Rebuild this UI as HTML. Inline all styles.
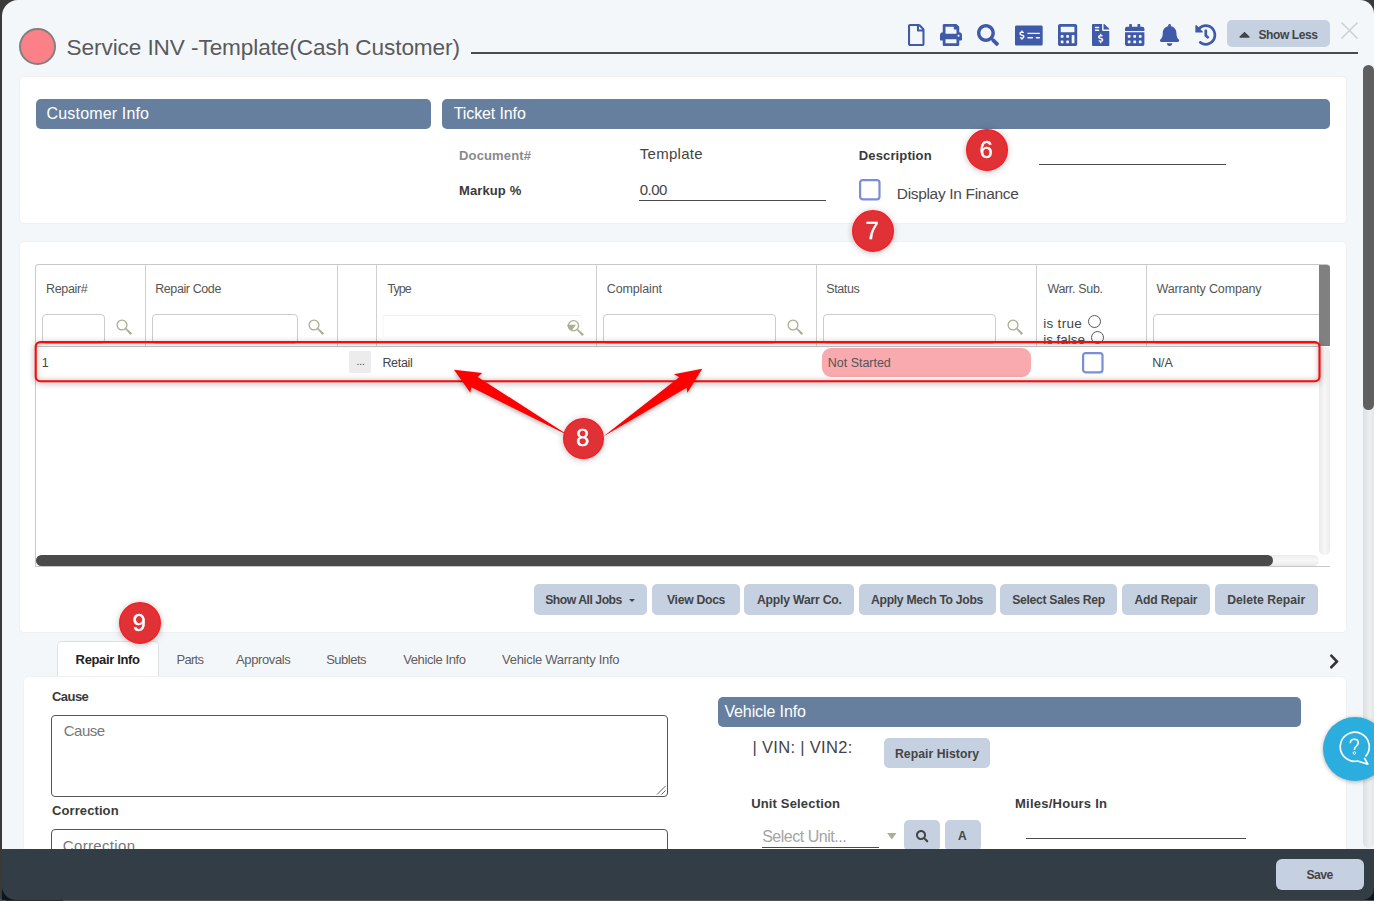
<!DOCTYPE html>
<html><head><meta charset="utf-8"><title>Service INV</title>
<style>
html,body{margin:0;padding:0;}
body{width:1374px;height:901px;overflow:hidden;position:relative;background:#3a3a3a;font-family:"Liberation Sans",sans-serif;}
div,span,svg{position:absolute;box-sizing:border-box;}
.t{white-space:nowrap;line-height:1;}
.ic{overflow:visible;}
#modal{left:2px;top:0;width:1372px;height:900px;background:#f4f7fa;border-radius:16px 14px 12px 14px;overflow:hidden;}
.panel{background:#fff;border:1px solid #eef0f2;border-radius:5px;}
.bar{background:#677f9f;border-radius:5px;height:30px;}
.btn{background:#c5d0e1;border-radius:5px;}
.ul{height:1px;background:#4a4a4a;}
.col{width:1px;background:#d0d0d0;top:265px;height:81px;}
.fin{border:1px solid #ccc;border-radius:4px;background:#fff;top:314px;height:30px;}
.radio{width:13px;height:13px;border:1px solid #555;border-radius:50%;background:#fff;}
</style></head><body>
<div id="modal"></div>

<!-- header -->
<div style="left:19px;top:28px;width:37px;height:37px;border-radius:50%;background:#fb8087;border:2px solid #808080"></div>
<div style="left:471px;top:52px;width:887px;height:2px;background:#4a4a4a"></div>
<div class="btn" style="left:1227px;top:20px;width:103px;height:27px"></div>
<svg class="ic" style="left:1341px;top:22px;width:17px;height:17px" viewBox="0 0 17 17"><path d="M0.500 0.500L16.500 16.500M16.500 0.500L0.500 16.500" stroke="#cfcfcf" stroke-width="1.600" fill="none"/></svg>

<!-- panel 1 -->
<div class="panel" style="left:19px;top:76px;width:1328px;height:148px"></div>
<div class="bar" style="left:36px;top:99px;width:395px"></div>
<div class="bar" style="left:442px;top:99px;width:888px"></div>
<div class="ul" style="left:639px;top:200px;width:187px"></div>
<div class="ul" style="left:1039px;top:164px;width:187px"></div>
<svg class="ic" style="left:859.1px;top:179.4px;width:21.6px;height:21.4px" viewBox="0 0 21.6 21.4"><rect x="1.1" y="1.1" width="19.4" height="19.2" rx="2.5" fill="#fff" stroke="#7b8dd6" stroke-width="2.2"/></svg>

<!-- panel 2 : grid -->
<div class="panel" style="left:19px;top:241px;width:1328px;height:392px"></div>
<div style="left:35px;top:264px;width:1295px;height:303px;border:1px solid #c8c8c8;border-right:none;border-radius:4px 4px 0 0;background:#fff"></div>
<div style="left:36px;top:346px;width:1283px;height:1px;background:#c4c4c4"></div>
<div class="col" style="left:145px"></div><div class="col" style="left:337px"></div><div class="col" style="left:376px"></div>
<div class="col" style="left:596px"></div><div class="col" style="left:816px"></div><div class="col" style="left:1036px"></div><div class="col" style="left:1146px"></div>
<div class="fin" style="left:42px;width:63px"></div>
<div class="fin" style="left:152px;width:146px"></div>
<div class="fin" style="left:383px;width:199px;border-color:#efefef;border-radius:0;border-left-color:#f8f8f8;border-right-color:#f8f8f8;border-bottom-color:#fdfdfd;top:315px;height:22px"></div>
<div class="fin" style="left:603px;width:173px"></div>
<div class="fin" style="left:823px;width:173px"></div>
<div class="fin" style="left:1153px;width:173px"></div>
<svg class="ic" style="left:116.1px;top:319.3px;width:17px;height:17px" viewBox="0 0 17 17"><circle cx="6" cy="6" r="4.9" fill="none" stroke="#a9af90" stroke-width="1.3"/><path d="M9.2 10 L10.3 8.900 L16.1 14.200 L14.400 16.100 Z" fill="#a9af90"/></svg><svg class="ic" style="left:308.3px;top:319.3px;width:17px;height:17px" viewBox="0 0 17 17"><circle cx="6" cy="6" r="4.9" fill="none" stroke="#a9af90" stroke-width="1.3"/><path d="M9.2 10 L10.3 8.900 L16.1 14.200 L14.400 16.100 Z" fill="#a9af90"/></svg><svg class="ic" style="left:786.8px;top:319.3px;width:17px;height:17px" viewBox="0 0 17 17"><circle cx="6" cy="6" r="4.9" fill="none" stroke="#a9af90" stroke-width="1.3"/><path d="M9.2 10 L10.3 8.900 L16.1 14.200 L14.400 16.100 Z" fill="#a9af90"/></svg><svg class="ic" style="left:1006.8px;top:319.3px;width:17px;height:17px" viewBox="0 0 17 17"><circle cx="6" cy="6" r="4.9" fill="none" stroke="#a9af90" stroke-width="1.3"/><path d="M9.2 10 L10.3 8.900 L16.1 14.200 L14.400 16.100 Z" fill="#a9af90"/></svg>
<svg class="ic" style="left:560px;top:315px;width:30px;height:25px" viewBox="560 315 30 25"><circle cx="573.500" cy="325.700" r="5.100" fill="none" stroke="#a9af90" stroke-width="1.300"/><path d="M566.900 324.700 L575.900 324.700 L572.400 329.700 L570.300 330 Q567.700 328.300 567.400 325.700 Z" fill="#a9af90"/><path d="M576.700 329.900 L577.800 328.900 L583.900 334.300 L582.200 336.100 Z" fill="#a9af90"/></svg>
<div class="radio" style="left:1088px;top:315px"></div>
<div class="radio" style="left:1091px;top:331px"></div>
<!-- grid scrollbars -->
<div style="left:1319px;top:265px;width:11px;height:81px;background:#808080;border-radius:0 3px 0 0"></div>
<div style="left:1319px;top:346px;width:11px;height:209px;background:linear-gradient(90deg,#e9e9e9,#f7f7f7 50%,#ececec);border-radius:6px"></div>
<div style="left:36px;top:555px;width:1283px;height:11px;background:linear-gradient(#ececec,#f7f7f7 50%,#e9e9e9);border-radius:6px"></div>
<div style="left:36px;top:555px;width:1237px;height:11px;background:#4a4a4a;border-radius:6px"></div>
<!-- row -->
<div style="left:349px;top:351px;width:22px;height:22px;background:#ececec"></div>
<span class="t" style="left:356.5px;top:357px;font-size:10px;color:#444;letter-spacing:0">...</span>
<div style="left:822px;top:348px;width:209px;height:29px;background:#f8aaae;border-radius:9px"></div>
<svg class="ic" style="left:1081.5px;top:351.7px;width:21.6px;height:21.4px" viewBox="0 0 21.6 21.4"><rect x="1.1" y="1.1" width="19.4" height="19.2" rx="2.5" fill="#fff" stroke="#7b8dd6" stroke-width="2.2"/></svg>
<!-- red annotation -->
<div style="left:35px;top:342px;width:1285px;height:40px;border-radius:5px;box-shadow:0 1px 6px 1px rgba(0,0,0,.24), inset 0 0 6px 1px rgba(0,0,0,.32)"></div>
<svg class="ic" style="z-index:3;left:30px;top:336px;width:1296px;height:52px" viewBox="30 336 1296 52"><rect x="35.700" y="342.100" width="1283.800" height="39.100" rx="4.500" fill="none" stroke="#fd0909" stroke-width="2.100"/></svg>
<svg class="ic" style="z-index:3;left:430px;top:340px;width:300px;height:140px;filter:drop-shadow(0 2px 2px rgba(0,0,0,.3))" viewBox="430 340 300 140">
<path fill="#fe0000" d="M453.950 369.800 L482.300 372.900 L477.750 376.900 L569.450 435.900 L471.400 387.300 L470.300 392.750 Z"/>
<path fill="#fe0000" d="M702.300 368.700 L673.900 374.200 L679.200 377.250 L603.300 436.400 L686.600 387.800 L687.400 392.750 Z"/>
</svg>

<!-- buttons row -->
<div class="btn" style="left:534px;top:584px;width:113px;height:31px"></div>
<div class="btn" style="left:652px;top:584px;width:88px;height:31px"></div>
<div class="btn" style="left:744px;top:584px;width:110px;height:31px"></div>
<div class="btn" style="left:859px;top:584px;width:137px;height:31px"></div>
<div class="btn" style="left:1000px;top:584px;width:117px;height:31px"></div>
<div class="btn" style="left:1122px;top:584px;width:88px;height:31px"></div>
<div class="btn" style="left:1215px;top:584px;width:103px;height:31px"></div>
<svg class="ic" style="left:629px;top:599px;width:6px;height:3px" viewBox="0 0 6 3"><path d="M0 0h6l-3 3z" fill="#444"/></svg>

<!-- tabs -->
<div style="left:57px;top:641px;width:102px;height:36px;background:#fff;border:1px solid #dee2e6;border-bottom:none;border-radius:5px 5px 0 0"></div>
<div class="panel" style="left:23px;top:676px;width:1324px;height:200px;border-radius:6px 6px 0 0"></div>
<div style="left:51px;top:715px;width:617px;height:82px;border:1px solid #555;border-radius:4px;background:#fff"></div>
<svg class="ic" style="left:656px;top:785px;width:10px;height:10px" viewBox="0 0 10 10"><path d="M9.500 1L1 9.500M9.500 5.500L5.500 9.500" stroke="#666" stroke-width="1" fill="none"/></svg>
<div style="left:51px;top:829px;width:617px;height:82px;border:1px solid #555;border-radius:4px;background:#fff"></div>
<div class="bar" style="left:718px;top:697px;width:583px"></div>
<div class="btn" style="left:884px;top:738px;width:106px;height:30px"></div>
<div class="ul" style="left:762px;top:847px;width:117px"></div>
<svg class="ic" style="left:886.600px;top:833px;width:9.600px;height:6.600px" viewBox="0 0 10 7"><path d="M0 0h10l-5 7z" fill="#a9af90"/></svg>
<div class="btn" style="left:904px;top:820px;width:36px;height:31px"></div>
<div class="btn" style="left:945px;top:820px;width:36px;height:31px"></div>
<div class="ul" style="left:1026px;top:838px;width:220px"></div>

<svg class="ic" style="z-index:4;left:557.10px;top:411.90px;width:53.0px;height:53.0px;filter:drop-shadow(0 1.5px 3px rgba(0,0,0,.25))" viewBox="0 0 53.0 53.0"><circle cx="26.5" cy="26.5" r="19.8" fill="#e03137" stroke="#fa1c22" stroke-width="1.4"/><text x="25.6" y="34.0" text-anchor="middle" font-family="Liberation Sans, sans-serif" font-size="24" font-weight="400" fill="#fff" stroke="#fff" stroke-width="0.4">8</text></svg>
<svg class="ic" style="z-index:4;left:959.55px;top:123.45px;width:54px;height:54px;filter:drop-shadow(0 1.5px 3px rgba(0,0,0,.25))" viewBox="0 0 54 54"><circle cx="27.0" cy="27.0" r="20.3" fill="#e03137" stroke="#fa1c22" stroke-width="1.4"/><text x="26.1" y="34.5" text-anchor="middle" font-family="Liberation Sans, sans-serif" font-size="24" font-weight="400" fill="#fff" stroke="#fff" stroke-width="0.4">6</text></svg>
<svg class="ic" style="z-index:4;left:845.60px;top:203.80px;width:54px;height:54px;filter:drop-shadow(0 1.5px 3px rgba(0,0,0,.25))" viewBox="0 0 54 54"><circle cx="27.0" cy="27.0" r="20.3" fill="#e03137" stroke="#fa1c22" stroke-width="1.4"/><text x="26.1" y="34.5" text-anchor="middle" font-family="Liberation Sans, sans-serif" font-size="24" font-weight="400" fill="#fff" stroke="#fff" stroke-width="0.4">7</text></svg>
<svg class="ic" style="z-index:4;left:112.65px;top:595.60px;width:54px;height:54px;filter:drop-shadow(0 1.5px 3px rgba(0,0,0,.25))" viewBox="0 0 54 54"><circle cx="27.0" cy="27.0" r="20.3" fill="#e03137" stroke="#fa1c22" stroke-width="1.4"/><text x="26.1" y="34.5" text-anchor="middle" font-family="Liberation Sans, sans-serif" font-size="24" font-weight="400" fill="#fff" stroke="#fff" stroke-width="0.4">9</text></svg>

<!-- main scrollbar -->
<div style="left:1363px;top:65px;width:11px;height:783px;background:linear-gradient(90deg,#dcdfe1,#eceeef 60%,#e4e6e8);border-radius:6px"></div>
<div style="left:1363px;top:65px;width:11px;height:345px;background:#5f5f5f;border-radius:6px"></div>

<!-- help bubble -->
<div style="left:1322.800px;top:717px;width:64px;height:64px;border-radius:50%;background:#2baedd;box-shadow:0 1px 4px rgba(0,0,0,.3)"></div>
<svg class="ic" style="left:1334.800px;top:729px;width:38px;height:38px" viewBox="1336 729 38 38"><path d="M1366.500 756.500 A14.500 14.500 0 1 0 1358.500 761 L1368.800 764.200 L1365.300 757.800" fill="none" stroke="#fff" stroke-width="1.700" stroke-linejoin="round"/><path d="M1351.300 743.200c0-2.400 1.700-3.900 4-3.900s4 1.400 4 3.500c0 2.500-2.300 3.300-3.300 4.800-.4.700-.5 1.300-.5 2.300" fill="none" stroke="#fff" stroke-width="1.600"/><circle cx="1355.400" cy="753" r="1.300" fill="none" stroke="#fff" stroke-width="1"/></svg>

<!-- footer -->
<div style="left:0;top:899px;width:1374px;height:2px;background:#505050;z-index:5"></div>
<div style="left:2px;top:880px;width:22px;height:20px;background:#0c1620;z-index:5"></div>
<div style="left:1350px;top:880px;width:24px;height:20px;background:#0c1620;z-index:5"></div>
<div style="left:6px;top:900px;width:57px;height:1px;background:#2c2c2c;z-index:5"></div>
<div style="left:2px;top:849px;width:1372px;height:51px;background:#333d45;border-radius:0 0 12px 14px;z-index:5"></div>
<div class="btn" style="left:1276px;top:859px;width:88px;height:31px;border-radius:6px;z-index:6"></div>

<svg class="ic" style="left:908px;top:24px;width:16.5px;height:22px" viewBox="0 0 384 512" preserveAspectRatio="none"><path fill="#3f5aa8" d="M369.9 97.9L286 14C277 5 264.8 0 252.1 0H48C21.500 0 0 21.500 0 48v416c0 26.500 21.500 48 48 48h288c26.500 0 48-21.500 48-48V131.900c0-12.700-5.100-25-14.100-34zM332.100 128H256V51.900l76.100 76.100zM48 464V48h160v104c0 13.300 10.700 24 24 24h104v288H48z"/></svg>
<svg class="ic" style="left:939.6px;top:24px;width:22px;height:22px" viewBox="0 0 512 512" preserveAspectRatio="none"><path fill="#3f5aa8" d="M448 192V77.250c0-8.490-3.370-16.620-9.370-22.630L393.370 9.370c-6-6-14.140-9.370-22.630-9.370H96C78.330 0 64 14.330 64 32v160c-35.350 0-64 28.650-64 64v112c0 8.840 7.160 16 16 16h48v96c0 17.670 14.330 32 32 32h320c17.670 0 32-14.330 32-32v-96h48c8.840 0 16-7.160 16-16V256c0-35.350-28.650-64-64-64zm-64 256H128v-96h256v96zm0-224H128V64h192v48c0 8.840 7.160 16 16 16h48v96zm48 72c-13.250 0-24-10.750-24-24 0-13.260 10.750-24 24-24s24 10.740 24 24c0 13.250-10.750 24-24 24z"/></svg>
<svg class="ic" style="left:977.3px;top:24px;width:22px;height:22px" viewBox="0 0 512 512" preserveAspectRatio="none"><path fill="#3f5aa8" d="M505 442.700L405.300 343c-4.500-4.500-10.600-7-17-7H372c27.600-35.300 44-79.700 44-128C416 93.100 322.900 0 208 0S0 93.100 0 208s93.100 208 208 208c48.300 0 92.700-16.400 128-44v16.300c0 6.400 2.500 12.500 7 17l99.700 99.700c9.400 9.400 24.600 9.400 33.900 0l28.300-28.300c9.400-9.400 9.400-24.600.1-34zM208 336c-70.700 0-128-57.200-128-128 0-70.700 57.200-128 128-128 70.700 0 128 57.200 128 128 0 70.700-57.200 128-128 128z"/></svg>
<svg class="ic" style="left:1014.6px;top:23.5px;width:27.7px;height:23px" viewBox="0 0 640 512" preserveAspectRatio="none"><path fill="#3f5aa8" d="M608 32H32C14.330 32 0 46.330 0 64v384c0 17.670 14.330 32 32 32h576c17.670 0 32-14.330 32-32V64c0-17.670-14.330-32-32-32zM176 327.880V344c0 4.420-3.580 8-8 8h-16c-4.420 0-8-3.580-8-8v-16.290c-11.290-.58-22.270-4.520-31.370-11.350-3.900-2.930-4.100-8.770-.57-12.140l11.750-11.210c2.770-2.640 6.890-2.760 10.130-.73 3.870 2.420 8.260 3.720 12.820 3.720h28.110c6.500 0 11.800-5.920 11.800-13.190 0-5.950-3.610-11.190-8.770-12.730l-45-13.500c-18.590-5.580-31.580-23.420-31.580-43.390 0-24.520 19.050-44.440 42.670-45.070V152c0-4.420 3.580-8 8-8h16c4.420 0 8 3.580 8 8v16.290c11.290.58 22.270 4.510 31.370 11.350 3.900 2.930 4.100 8.770.57 12.140l-11.750 11.210c-2.770 2.640-6.890 2.760-10.130.73-3.870-2.430-8.260-3.720-12.820-3.720h-28.110c-6.500 0-11.800 5.920-11.800 13.190 0 5.950 3.610 11.190 8.770 12.730l45 13.500c18.590 5.580 31.580 23.420 31.580 43.390 0 24.530-19.040 44.440-42.670 45.070zM416 312c0 4.420-3.580 8-8 8H296c-4.420 0-8-3.580-8-8v-16c0-4.420 3.580-8 8-8h112c4.420 0 8 3.580 8 8v16zm160 0c0 4.420-3.580 8-8 8h-80c-4.420 0-8-3.580-8-8v-16c0-4.420 3.580-8 8-8h80c4.420 0 8 3.580 8 8v16zm0-96c0 4.420-3.580 8-8 8H296c-4.420 0-8-3.580-8-8v-16c0-4.420 3.580-8 8-8h272c4.420 0 8 3.580 8 8v16z"/></svg>
<svg class="ic" style="left:1058.3px;top:24px;width:19.2px;height:22px" viewBox="0 0 448 512" preserveAspectRatio="none"><path fill="#3f5aa8" d="M400 0H48C22.400 0 0 22.400 0 48v416c0 25.600 22.400 48 48 48h352c25.600 0 48-22.400 48-48V48c0-25.600-22.400-48-48-48zM128 435.200c0 6.400-6.400 12.800-12.800 12.800H76.800c-6.400 0-12.800-6.400-12.800-12.800v-38.400c0-6.400 6.400-12.800 12.800-12.800h38.400c6.400 0 12.800 6.400 12.800 12.800v38.400zm0-128c0 6.400-6.400 12.800-12.800 12.800H76.800c-6.400 0-12.800-6.400-12.800-12.800v-38.400c0-6.400 6.400-12.800 12.800-12.800h38.400c6.400 0 12.800 6.400 12.800 12.800v38.400zm128 128c0 6.400-6.400 12.800-12.800 12.800h-38.400c-6.400 0-12.800-6.400-12.800-12.800v-38.400c0-6.400 6.400-12.800 12.800-12.800h38.400c6.400 0 12.800 6.400 12.800 12.800v38.400zm0-128c0 6.400-6.400 12.800-12.800 12.800h-38.400c-6.400 0-12.800-6.400-12.800-12.800v-38.400c0-6.400 6.400-12.800 12.800-12.800h38.400c6.400 0 12.800 6.400 12.800 12.800v38.400zm128 128c0 6.400-6.400 12.800-12.800 12.800h-38.400c-6.400 0-12.800-6.400-12.800-12.800V268.800c0-6.400 6.400-12.800 12.800-12.800h38.400c6.400 0 12.800 6.400 12.800 12.800v166.400zm0-256c0 6.400-6.400 12.800-12.800 12.800H76.800c-6.400 0-12.800-6.400-12.800-12.800V76.800C64 70.400 70.400 64 76.800 64h294.400c6.400 0 12.800 6.400 12.800 12.800v102.400z"/></svg>
<svg class="ic" style="left:1092.3px;top:24px;width:17.3px;height:22px" viewBox="0 0 384 512" preserveAspectRatio="none"><path fill="#3f5aa8" d="M377 105L279.100 7c-4.500-4.500-10.600-7-17-7H256v128h128v-6.100c0-6.300-2.500-12.400-7-16.900zm-153 31V0H24C10.700 0 0 10.700 0 24v464c0 13.300 10.700 24 24 24h336c13.300 0 24-10.700 24-24V160H248c-13.200 0-24-10.800-24-24zM64 72c0-4.420 3.580-8 8-8h80c4.420 0 8 3.580 8 8v16c0 4.420-3.580 8-8 8H72c-4.420 0-8-3.580-8-8V72zm0 80v-16c0-4.420 3.580-8 8-8h80c4.420 0 8 3.580 8 8v16c0 4.420-3.580 8-8 8H72c-4.420 0-8-3.580-8-8zm144 263.880V440c0 4.420-3.580 8-8 8h-16c-4.420 0-8-3.580-8-8v-24.290c-11.290-.58-22.270-4.520-31.370-11.350-3.900-2.930-4.100-8.770-.57-12.140l11.750-11.210c2.770-2.640 6.890-2.760 10.130-.73 3.870 2.420 8.260 3.720 12.820 3.720h28.110c6.500 0 11.800-5.920 11.800-13.190 0-5.950-3.610-11.190-8.770-12.730l-45-13.500c-18.590-5.580-31.580-23.420-31.580-43.390 0-24.520 19.050-44.440 42.670-45.070V232c0-4.420 3.580-8 8-8h16c4.420 0 8 3.580 8 8v24.290c11.290.58 22.270 4.510 31.370 11.350 3.900 2.930 4.100 8.770.57 12.140l-11.750 11.210c-2.770 2.640-6.890 2.760-10.130.73-3.870-2.430-8.260-3.720-12.820-3.720h-28.110c-6.500 0-11.800 5.920-11.800 13.190 0 5.950 3.610 11.190 8.770 12.730l45 13.500c18.590 5.580 31.580 23.420 31.580 43.390 0 24.530-19.050 44.440-42.670 45.070z"/></svg>
<svg class="ic" style="left:1124.7px;top:24px;width:19.4px;height:22px" viewBox="0 0 448 512" preserveAspectRatio="none"><path fill="#3f5aa8" d="M0 464c0 26.500 21.500 48 48 48h352c26.500 0 48-21.500 48-48V192H0v272zm320-196c0-6.600 5.400-12 12-12h40c6.600 0 12 5.400 12 12v40c0 6.600-5.400 12-12 12h-40c-6.600 0-12-5.400-12-12v-40zm0 128c0-6.600 5.400-12 12-12h40c6.600 0 12 5.400 12 12v40c0 6.600-5.400 12-12 12h-40c-6.600 0-12-5.400-12-12v-40zM192 268c0-6.600 5.400-12 12-12h40c6.600 0 12 5.400 12 12v40c0 6.600-5.400 12-12 12h-40c-6.600 0-12-5.400-12-12v-40zm0 128c0-6.600 5.400-12 12-12h40c6.600 0 12 5.400 12 12v40c0 6.600-5.400 12-12 12h-40c-6.600 0-12-5.400-12-12v-40zM64 268c0-6.600 5.400-12 12-12h40c6.600 0 12 5.400 12 12v40c0 6.600-5.400 12-12 12H76c-6.600 0-12-5.400-12-12v-40zm0 128c0-6.600 5.400-12 12-12h40c6.600 0 12 5.400 12 12v40c0 6.600-5.400 12-12 12H76c-6.600 0-12-5.400-12-12v-40zM400 64h-48V16c0-8.800-7.200-16-16-16h-32c-8.800 0-16 7.200-16 16v48H160V16c0-8.800-7.200-16-16-16h-32c-8.800 0-16 7.200-16 16v48H48C21.500 64 0 85.500 0 112v48h448v-48c0-26.500-21.500-48-48-48z"/></svg>
<svg class="ic" style="left:1159.8px;top:24px;width:19.2px;height:22px" viewBox="0 0 448 512" preserveAspectRatio="none"><path fill="#3f5aa8" d="M224 512c35.320 0 63.970-28.650 63.970-64H160.030c0 35.350 28.650 64 63.970 64zm215.390-149.710c-19.320-20.760-55.470-51.990-55.470-154.290 0-77.700-54.480-139.900-127.940-155.160V32c0-17.670-14.320-32-31.980-32s-31.980 14.330-31.980 32v20.840C118.560 68.100 64.080 130.300 64.080 208c0 102.300-36.150 133.530-55.470 154.290-6 6.450-8.660 14.160-8.610 21.710.11 16.400 12.980 32 32.100 32h383.800c19.120 0 32-15.600 32.100-32 .05-7.550-2.610-15.270-8.610-21.710z"/></svg>
<svg class="ic" style="left:1194.5px;top:24px;width:21.6px;height:22px" viewBox="0 0 512 512" preserveAspectRatio="none"><path fill="#3f5aa8" d="M504 255.531c.253 136.640-111.180 248.372-247.820 248.468-59.015.042-113.223-20.530-155.822-54.911-11.077-8.940-11.905-25.541-1.839-35.607l11.267-11.267c8.609-8.609 22.353-9.551 31.891-1.984C173.062 425.135 212.781 440 256 440c101.705 0 184-82.311 184-184 0-101.705-82.311-184-184-184-48.814 0-93.149 18.969-126.068 49.932l50.754 50.754c10.080 10.080 2.941 27.314-11.313 27.314H24c-8.837 0-16-7.163-16-16V38.627c0-14.254 17.234-21.393 27.314-11.314l49.372 49.372C129.209 34.136 189.552 8 256 8c136.810 0 247.747 110.780 248 247.531zm-180.912 78.784l9.823-12.630c8.138-10.463 6.253-25.542-4.210-33.679L288 256.349V152c0-13.255-10.745-24-24-24h-16c-13.255 0-24 10.745-24 24v135.651l65.409 50.874c10.463 8.137 25.541 6.253 33.679-4.210z"/></svg>
<svg class="ic" style="left:1238.6px;top:26px;width:11.05px;height:17px" viewBox="0 0 320 512" preserveAspectRatio="none"><path fill="#444" d="M288.662 352H31.338c-17.818 0-26.741-21.543-14.142-34.142l128.662-128.662c7.810-7.810 20.474-7.810 28.284 0l128.662 128.662c12.600 12.599 3.676 34.142-14.142 34.142z"/></svg>
<svg class="ic" style="left:1328.6px;top:653.05px;width:10.4px;height:16.9px" viewBox="0 0 320 512" preserveAspectRatio="none"><path fill="#333" d="M285.476 272.971L91.132 467.314c-9.373 9.373-24.569 9.373-33.941 0l-22.667-22.667c-9.357-9.357-9.375-24.522-.040-33.901L188.505 256 34.484 101.255c-9.335-9.379-9.317-24.544.040-33.901l22.667-22.667c9.373-9.373 24.569-9.373 33.941 0L285.475 239.030c9.373 9.372 9.373 24.568.001 33.941z"/></svg>
<svg class="ic" style="left:916px;top:830.2px;width:12.4px;height:12.4px" viewBox="0 0 512 512" preserveAspectRatio="none"><path fill="#444" d="M505 442.700L405.300 343c-4.500-4.500-10.600-7-17-7H372c27.600-35.300 44-79.700 44-128C416 93.100 322.900 0 208 0S0 93.100 0 208s93.100 208 208 208c48.300 0 92.700-16.400 128-44v16.300c0 6.400 2.500 12.500 7 17l99.700 99.700c9.400 9.400 24.600 9.400 33.900 0l28.300-28.300c9.400-9.400 9.400-24.600.1-34zM208 336c-70.700 0-128-57.200-128-128 0-70.700 57.200-128 128-128 70.700 0 128 57.200 128 128 0 70.700-57.200 128-128 128z"/></svg>
<span id="title" class="t" style="left:66.6px;top:37.00px;font-size:22.6px;font-weight:400;color:#5a5a5a;letter-spacing:-0.096px">Service INV -Template(Cash Customer)</span>
<span id="custinfo" class="t" style="left:46.6px;top:106.00px;font-size:16px;font-weight:400;color:#fff;letter-spacing:0.160px">Customer Info</span>
<span id="tickinfo" class="t" style="left:453.8px;top:106.00px;font-size:16px;font-weight:400;color:#fff;letter-spacing:-0.122px">Ticket Info</span>
<span id="docnum" class="t" style="left:459.0px;top:149.00px;font-size:13px;font-weight:700;color:#8a8a8a;letter-spacing:0.150px">Document#</span>
<span id="template" class="t" style="left:639.8px;top:146.00px;font-size:15px;font-weight:400;color:#444;letter-spacing:0.276px">Template</span>
<span id="markup" class="t" style="left:459.0px;top:184.00px;font-size:13px;font-weight:700;color:#3a3a3a;letter-spacing:0.112px">Markup %</span>
<span id="zero" class="t" style="left:639.8px;top:182.00px;font-size:15px;font-weight:400;color:#444;letter-spacing:-0.533px">0.00</span>
<span id="desc" class="t" style="left:858.8px;top:149.00px;font-size:13px;font-weight:700;color:#3a3a3a;letter-spacing:0.128px">Description</span>
<span id="dispfin" class="t" style="left:896.8px;top:186.00px;font-size:15.5px;font-weight:400;color:#4a4a4a;letter-spacing:-0.325px">Display In Finance</span>
<span id="h_repair" class="t" style="left:46.0px;top:283.00px;font-size:12.5px;font-weight:400;color:#555;letter-spacing:-0.331px">Repair#</span>
<span id="h_code" class="t" style="left:155.2px;top:283.00px;font-size:12.5px;font-weight:400;color:#555;letter-spacing:-0.399px">Repair Code</span>
<span id="h_type" class="t" style="left:387.4px;top:283.00px;font-size:12.5px;font-weight:400;color:#555;letter-spacing:-0.903px">Type</span>
<span id="h_compl" class="t" style="left:606.8px;top:283.00px;font-size:12.5px;font-weight:400;color:#555;letter-spacing:-0.137px">Complaint</span>
<span id="h_status" class="t" style="left:826.2px;top:283.00px;font-size:12.5px;font-weight:400;color:#555;letter-spacing:-0.367px">Status</span>
<span id="h_warr" class="t" style="left:1047.4px;top:283.00px;font-size:12.5px;font-weight:400;color:#555;letter-spacing:-0.332px">Warr. Sub.</span>
<span id="h_wco" class="t" style="left:1156.6px;top:283.00px;font-size:12.5px;font-weight:400;color:#555;letter-spacing:-0.148px">Warranty Company</span>
<span id="istrue" class="t" style="left:1043.2px;top:317.00px;font-size:13.5px;font-weight:400;color:#444;letter-spacing:0.305px">is true</span>
<span id="isfalse" class="t" style="left:1043.2px;top:333.00px;font-size:13.5px;font-weight:400;color:#444;letter-spacing:-0.032px">is false</span>
<span id="r_1" class="t" style="left:41.8px;top:357.00px;font-size:12.5px;font-weight:400;color:#444;letter-spacing:0.000px">1</span>
<span id="r_retail" class="t" style="left:382.4px;top:357.00px;font-size:12.5px;font-weight:400;color:#444;letter-spacing:-0.314px">Retail</span>
<span id="r_ns" class="t" style="left:827.8px;top:357.00px;font-size:12.5px;font-weight:400;color:#555;letter-spacing:-0.023px">Not Started</span>
<span id="r_na" class="t" style="left:1152.2px;top:357.00px;font-size:12.5px;font-weight:400;color:#444;letter-spacing:-0.122px">N/A</span>
<span id="b_show" class="t" style="left:545.2px;top:594.00px;font-size:12.2px;font-weight:700;color:#444;letter-spacing:-0.471px">Show All Jobs</span>
<span id="b_view" class="t" style="left:667.0px;top:594.00px;font-size:12.2px;font-weight:700;color:#444;letter-spacing:-0.294px">View Docs</span>
<span id="b_warr" class="t" style="left:757.0px;top:594.00px;font-size:12.2px;font-weight:700;color:#444;letter-spacing:-0.198px">Apply Warr Co.</span>
<span id="b_mech" class="t" style="left:871.0px;top:594.00px;font-size:12.2px;font-weight:700;color:#444;letter-spacing:-0.308px">Apply Mech To Jobs</span>
<span id="b_sales" class="t" style="left:1012.2px;top:594.00px;font-size:12.2px;font-weight:700;color:#444;letter-spacing:-0.305px">Select Sales Rep</span>
<span id="b_add" class="t" style="left:1134.4px;top:594.00px;font-size:12.2px;font-weight:700;color:#444;letter-spacing:-0.201px">Add Repair</span>
<span id="b_del" class="t" style="left:1227.2px;top:594.00px;font-size:12.2px;font-weight:700;color:#444;letter-spacing:0.007px">Delete Repair</span>
<span id="t_repair" class="t" style="left:75.6px;top:653.00px;font-size:13px;font-weight:700;color:#222;letter-spacing:-0.351px">Repair Info</span>
<span id="t_parts" class="t" style="left:176.4px;top:653.00px;font-size:13px;font-weight:400;color:#5e5e5e;letter-spacing:-0.686px">Parts</span>
<span id="t_appr" class="t" style="left:236.0px;top:653.00px;font-size:13px;font-weight:400;color:#5e5e5e;letter-spacing:-0.378px">Approvals</span>
<span id="t_sub" class="t" style="left:326.2px;top:653.00px;font-size:13px;font-weight:400;color:#5e5e5e;letter-spacing:-0.496px">Sublets</span>
<span id="t_veh" class="t" style="left:403.2px;top:653.00px;font-size:13px;font-weight:400;color:#5e5e5e;letter-spacing:-0.402px">Vehicle Info</span>
<span id="t_vwi" class="t" style="left:502.0px;top:653.00px;font-size:13px;font-weight:400;color:#5e5e5e;letter-spacing:-0.274px">Vehicle Warranty Info</span>
<span id="l_cause" class="t" style="left:52.0px;top:690.00px;font-size:13px;font-weight:700;color:#3a3a3a;letter-spacing:-0.558px">Cause</span>
<span id="p_cause" class="t" style="left:63.8px;top:723.00px;font-size:15px;font-weight:400;color:#777;letter-spacing:-0.540px">Cause</span>
<span id="l_corr" class="t" style="left:52.0px;top:804.00px;font-size:13px;font-weight:700;color:#3a3a3a;letter-spacing:0.095px">Correction</span>
<span id="p_corr" class="t" style="left:62.8px;top:838.00px;font-size:15px;font-weight:400;color:#777;letter-spacing:0.333px">Correction</span>
<span id="vehinfo" class="t" style="left:724.4px;top:704.00px;font-size:16px;font-weight:400;color:#fff;letter-spacing:-0.104px">Vehicle Info</span>
<span id="vin" class="t" style="left:752.4px;top:739.00px;font-size:16.5px;font-weight:400;color:#444;letter-spacing:0.330px">| VIN: | VIN2:</span>
<span id="b_hist" class="t" style="left:895.0px;top:748.00px;font-size:12.2px;font-weight:700;color:#444;letter-spacing:0.053px">Repair History</span>
<span id="l_unit" class="t" style="left:751.2px;top:797.00px;font-size:13px;font-weight:700;color:#3a3a3a;letter-spacing:0.161px">Unit Selection</span>
<span id="selunit" class="t" style="left:762.2px;top:829.00px;font-size:16px;font-weight:400;color:#a4a4a4;letter-spacing:-0.485px">Select Unit...</span>
<span id="b_a" class="t" style="left:958.0px;top:830.00px;font-size:12px;font-weight:700;color:#444;letter-spacing:0.000px">A</span>
<span id="l_miles" class="t" style="left:1015.0px;top:797.00px;font-size:13px;font-weight:700;color:#3a3a3a;letter-spacing:0.242px">Miles/Hours In</span>
<span id="save" class="t" style="left:1306.6px;top:869.00px;font-size:12.2px;font-weight:700;color:#444;letter-spacing:-0.624px;z-index:7">Save</span>
<span id="showless" class="t" style="left:1258.4px;top:29.00px;font-size:12px;font-weight:700;color:#444;letter-spacing:-0.386px">Show Less</span>
</body></html>
